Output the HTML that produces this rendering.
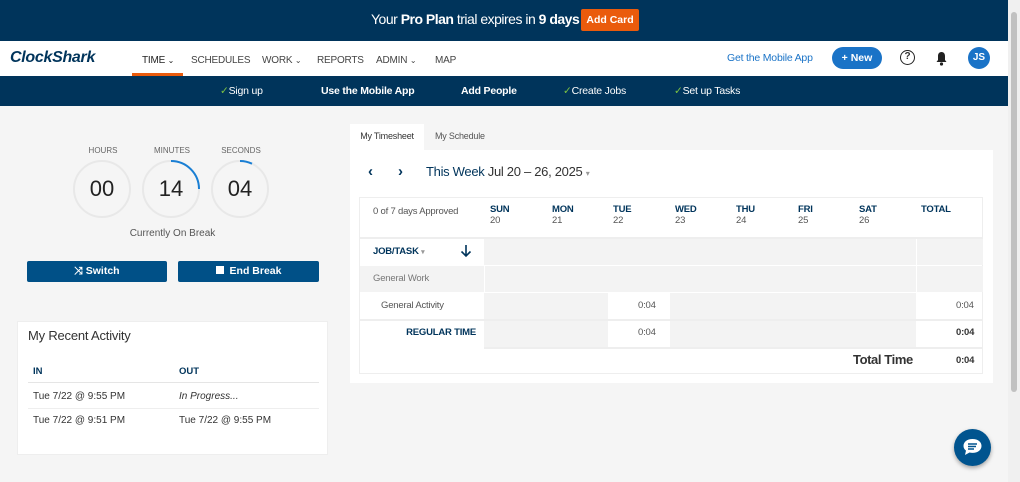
<!DOCTYPE html>
<html><head><meta charset="utf-8"><style>
*{box-sizing:border-box;margin:0;padding:0}
body{width:1020px;height:482px;overflow:hidden;background:#f5f5f5;font-family:"Liberation Sans",sans-serif;position:relative;color:#333}
.a{position:absolute}
.top{left:0;top:0;width:1008px;height:41px;background:#00345b;color:#fff;font-size:14px;letter-spacing:-0.5px}
.nav{left:0;top:41px;width:1008px;height:35px;background:#fff}
.sub{left:0;top:76px;width:1008px;height:30px;background:#00345b;color:#fff;font-size:10.5px;letter-spacing:-0.2px}
.ni{font-size:10px;color:#444;top:14px;letter-spacing:-0.2px}
.ck{color:#7cc242}
.circ{width:58px;height:58px;border-radius:50%;border:2px solid #e8e8e8;font-size:22px;text-align:center;line-height:54px;color:#222}
.lbl{font-size:8px;color:#666;text-align:center;width:60px}
.btn{background:#005087;color:#fff;font-size:10.5px;font-weight:bold;text-align:center;line-height:20px;height:21px;border-radius:2px}
.cell{position:absolute;font-size:10px;letter-spacing:-0.2px}
.g{background:#f3f3f3}
.hd{font-size:9.5px;font-weight:bold;color:#00345b}
.dn{font-size:9.5px;color:#555}
</style></head><body>
<div class="a top"><div class="a" style="left:371px;top:11px">Your <b>Pro Plan</b> trial expires in <b>9 days</b></div>
<div class="a" style="left:581px;top:9px;width:58px;height:22px;background:#ea5b0c;border-radius:2px;font-size:10.5px;letter-spacing:0;font-weight:bold;text-align:center;line-height:22px">Add Card</div></div>
<div class="a nav">
<div class="a" style="left:10px;top:8px;font-size:16px;font-weight:bold;font-style:italic;color:#00345b;letter-spacing:-0.3px">ClockShark</div>
<div class="a ni" style="left:142px;color:#222">TIME <span style="font-size:8px">⌄</span></div>
<div class="a" style="left:132px;top:32px;width:51px;height:3px;background:#ea5b0c"></div>
<div class="a ni" style="left:191px">SCHEDULES</div>
<div class="a ni" style="left:262px">WORK <span style="font-size:8px">⌄</span></div>
<div class="a ni" style="left:317px">REPORTS</div>
<div class="a ni" style="left:376px">ADMIN <span style="font-size:8px">⌄</span></div>
<div class="a ni" style="left:435px">MAP</div>
<div class="a" style="left:727px;top:11px;font-size:10.5px;color:#1a73c7;letter-spacing:-0.2px">Get the Mobile App</div>
<div class="a" style="left:832px;top:6px;width:50px;height:22px;border-radius:11px;background:#1a73c7;color:#fff;font-size:10.5px;font-weight:bold;text-align:center;line-height:22px">+ New</div>
<div class="a" style="left:900px;top:9px;width:15px;height:15px;border:1.8px solid #222;border-radius:50%;font-size:10px;font-weight:bold;text-align:center;line-height:12px">?</div>
<svg class="a" style="left:935px;top:10px" width="13" height="15" viewBox="0 0 13 15"><path d="M6.5 1C4 1 3 3 3 5v4L1.5 11h10L10 9V5c0-2-1-4-3.5-4z" fill="#222"/><circle cx="6.5" cy="13" r="1.6" fill="#222"/></svg>
<div class="a" style="left:968px;top:6px;width:22px;height:22px;border-radius:50%;background:#1a73c7;color:#fff;font-size:10px;font-weight:bold;text-align:center;line-height:22px">JS</div>
</div>
<div class="a sub">
<div class="a" style="left:220px;top:9px"><span class="ck">✓</span>Sign up</div>
<div class="a" style="left:321px;top:9px;font-weight:bold">Use the Mobile App</div>
<div class="a" style="left:461px;top:9px;font-weight:bold">Add People</div>
<div class="a" style="left:563px;top:9px"><span class="ck">✓</span>Create Jobs</div>
<div class="a" style="left:674px;top:9px"><span class="ck">✓</span>Set up Tasks</div>
</div>
<div class="a" style="left:1008px;top:0;width:12px;height:482px;background:#f0f0f0"><div class="a" style="left:3px;top:12px;width:6px;height:380px;background:#c1c1c1;border-radius:3px"></div></div>

<div class="a lbl" style="left:73px;top:146px">HOURS</div>
<div class="a lbl" style="left:142px;top:146px">MINUTES</div>
<div class="a lbl" style="left:211px;top:146px">SECONDS</div>
<div class="a circ" style="left:73px;top:160px">00</div>
<div class="a circ" style="left:142px;top:160px">14</div>
<div class="a circ" style="left:211px;top:160px">04</div>
<svg class="a" style="left:142px;top:160px" width="58" height="58"><path d="M29 1A28 28 0 0 1 57 29" fill="none" stroke="#1a7fd4" stroke-width="2"/></svg>
<svg class="a" style="left:211px;top:160px" width="58" height="58"><path d="M29 1A28 28 0 0 1 41 3.7" fill="none" stroke="#1a7fd4" stroke-width="2"/></svg>
<div class="a" style="left:100px;top:228px;width:145px;text-align:center;font-size:10px;color:#555">Currently On Break</div>
<div class="a btn" style="left:27px;top:261px;width:140px">⤨ Switch</div>
<div class="a btn" style="left:178px;top:261px;width:141px"><span style="display:inline-block;width:8px;height:8px;background:#fff;margin-right:6px"></span>End Break</div>

<div class="a" style="left:17px;top:321px;width:311px;height:134px;background:#fff;border:1px solid #eee">
<div class="a" style="left:10px;top:6px;font-size:13px;color:#333;letter-spacing:-0.2px">My Recent Activity</div>
<div class="a hd" style="left:15px;top:44px">IN</div><div class="a hd" style="left:161px;top:44px">OUT</div>
<div class="a" style="left:10px;top:60px;width:291px;border-top:1px solid #e5e5e5"></div>
<div class="a" style="left:15px;top:69px;font-size:10px">Tue 7/22 @ 9:55 PM</div><div class="a" style="left:161px;top:69px;font-size:10px;font-style:italic">In Progress...</div>
<div class="a" style="left:10px;top:86px;width:291px;border-top:1px solid #eee"></div>
<div class="a" style="left:15px;top:93px;font-size:10px">Tue 7/22 @ 9:51 PM</div><div class="a" style="left:161px;top:93px;font-size:10px">Tue 7/22 @ 9:55 PM</div>
</div>

<div class="a" style="left:350px;top:124px;width:74px;height:27px;background:#fff;font-size:9px;text-align:center;line-height:24px;letter-spacing:-0.2px">My Timesheet</div>
<div class="a" style="left:435px;top:124px;font-size:9px;line-height:24px;color:#555;letter-spacing:-0.2px">My Schedule</div>
<div class="a" style="left:350px;top:150px;width:643px;height:233px;background:#fff">
<div class="a" style="left:18px;top:13px;font-size:15px;font-weight:bold;color:#00345b">‹</div>
<div class="a" style="left:48px;top:13px;font-size:15px;font-weight:bold;color:#00345b">›</div>
<div class="a" style="left:76px;top:14px;font-size:13px;color:#00345b;letter-spacing:-0.3px">This Week <span style="color:#333">Jul 20 – 26, 2025</span> <span style="font-size:8px;color:#999">▾</span></div>
<div class="a" style="left:9px;top:47px;width:624px;height:177px;border:1px solid #eee">
<div class="cell dn" style="left:13px;top:8px">0 of 7 days Approved</div>
<div class="cell" style="left:130px;top:6px"><div class="hd">SUN</div><div class="dn">20</div></div>
<div class="cell" style="left:192px;top:6px"><div class="hd">MON</div><div class="dn">21</div></div>
<div class="cell" style="left:253px;top:6px"><div class="hd">TUE</div><div class="dn">22</div></div>
<div class="cell" style="left:315px;top:6px"><div class="hd">WED</div><div class="dn">23</div></div>
<div class="cell" style="left:376px;top:6px"><div class="hd">THU</div><div class="dn">24</div></div>
<div class="cell" style="left:438px;top:6px"><div class="hd">FRI</div><div class="dn">25</div></div>
<div class="cell" style="left:499px;top:6px"><div class="hd">SAT</div><div class="dn">26</div></div>
<div class="cell hd" style="left:561px;top:6px">TOTAL</div>
<div class="cell" style="left:0;top:39px;width:623px;border-top:2px solid #eee"></div>
<div class="cell g" style="left:124px;top:41px;width:432px;height:26px"></div>
<div class="cell g" style="left:557px;top:41px;width:66px;height:26px"></div>
<div class="cell hd" style="left:13px;top:48px">JOB/TASK <span style="color:#999;font-size:7px">▾</span></div>
<svg class="cell" style="left:100px;top:46px" width="12" height="14" viewBox="0 0 12 14"><path d="M6 1v11M1.5 7.5L6 12l4.5-4.5" fill="none" stroke="#00345b" stroke-width="1.6"/></svg>
<div class="cell g" style="left:0;top:68px;width:124px;height:26px"></div>
<div class="cell g" style="left:124px;top:68px;width:432px;height:26px;border-left:1px solid #fff"></div>
<div class="cell g" style="left:557px;top:68px;width:66px;height:26px"></div>
<div class="cell dn" style="left:13px;top:75px;color:#777">General Work</div>
<div class="cell g" style="left:124px;top:95px;width:432px;height:26px"></div>
<div class="cell" style="left:248px;top:95px;width:62px;height:26px;background:#fff"></div>
<div class="cell dn" style="left:21px;top:102px">General Activity</div>
<div class="cell dn" style="left:278px;top:102px">0:04</div>
<div class="cell dn" style="left:596px;top:102px">0:04</div>
<div class="cell" style="left:0;top:121px;width:623px;border-top:2px solid #eee"></div>
<div class="cell g" style="left:124px;top:123px;width:432px;height:26px"></div>
<div class="cell" style="left:248px;top:123px;width:62px;height:26px;background:#fff"></div>
<div class="cell hd" style="left:0;width:116px;text-align:right;top:129px">REGULAR TIME</div>
<div class="cell dn" style="left:278px;top:129px">0:04</div>
<div class="cell dn" style="left:596px;top:129px;font-weight:bold;color:#333">0:04</div>
<div class="cell" style="left:124px;top:149px;width:499px;border-top:2px solid #eee"></div>
<div class="cell" style="left:493px;top:154px;font-size:13px;font-weight:bold;color:#333;letter-spacing:-0.4px">Total Time</div>
<div class="cell dn" style="left:596px;top:157px;font-weight:bold;color:#333">0:04</div>
</div></div>

<div class="a" style="left:954px;top:429px;width:37px;height:37px;border-radius:50%;background:#00548f;box-shadow:0 2px 4px rgba(0,0,0,.35)">
<svg class="a" style="left:8px;top:9px" width="21" height="20" viewBox="0 0 21 20"><path d="M10.5 1C5 1 1.5 4 1.5 8c0 2 1 3.5 2.5 4.6L3 17l4.5-2.5c1 .3 2 .4 3 .4 5.5 0 9-3 9-7S16 1 10.5 1z" fill="#fff"/><path d="M6 6h9M6 8.5h8M6 11h6" stroke="#00548f" stroke-width="1.4"/></svg></div>
</body></html>
